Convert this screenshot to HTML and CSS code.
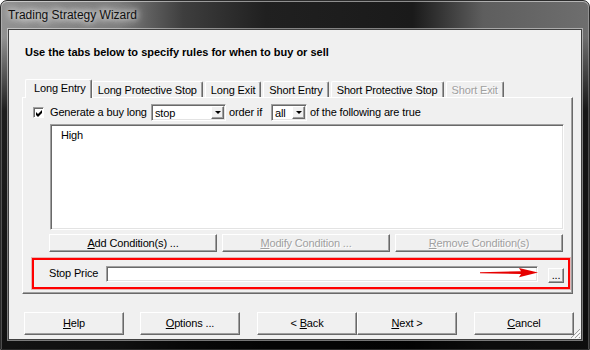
FILE: index.html
```html
<!DOCTYPE html>
<html lang="en">
<head>
    <meta charset="UTF-8">
    <meta name="viewport" content="width=device-width, initial-scale=1.0">
    <title>Trading Strategy Wizard</title>
    <link rel="stylesheet" href="styles.css">
</head>
<body>
    <div class="window">
        <div class="titlebar">Trading Strategy Wizard</div>
        <div class="frame">
            <div class="client">
                <h1 class="intro">Use the tabs below to specify rules for when to buy or sell</h1>

                <!-- Sekmeler -->
                <div class="tabs">
                    <div class="tab active">Long Entry</div>
                    <div class="tab">Long Protective Stop</div>
                    <div class="tab">Long Exit</div>
                    <div class="tab">Short Entry</div>
                    <div class="tab">Short Protective Stop</div>
                    <div class="tab disabled">Short Exit</div>
                </div>

                <div class="panel">
                    <div class="rule-row">
                        <span class="checkbox">
                            <svg width="7" height="7" viewBox="0 0 7 7"><path d="M0 2 L2 4 L6 0 L6 3 L2 7 L0 5 Z" fill="#000"/></svg>
                        </span>
                        <span class="rule-text generate">Generate a buy long</span>
                        <div class="combo combo-order">
                            <span class="combo-text">stop</span>
                            <span class="combo-drop"><span class="tri"></span></span>
                        </div>
                        <span class="rule-text order-if">order if</span>
                        <div class="combo combo-all">
                            <span class="combo-text">all</span>
                            <span class="combo-drop"><span class="tri"></span></span>
                        </div>
                        <span class="rule-text following">of the following are true</span>
                    </div>

                    <div class="listbox">
                        <div class="list-item">High</div>
                    </div>

                    <div class="cond-buttons">
                        <button class="btn cond-btn"><u>A</u>dd Condition(s) ...</button>
                        <button class="btn cond-btn" disabled><u>M</u>odify Condition ...</button>
                        <button class="btn cond-btn" disabled><u>R</u>emove Condition(s)</button>
                    </div>

                    <div class="stop-box">
                        <span class="stop-label">Stop Price</span>
                        <div class="textbox"></div>
                        <button class="btn btn-browse">...</button>
                        <svg class="arrow" width="60" height="12" viewBox="0 0 60 12">
                            <path d="M0 5.2 L41 4.3 L39 1 L58 5.6 L39 10.2 L41 6.9 L0 6.2 Z" fill="#e60000"/>
                        </svg>
                    </div>
                </div>

                <div class="footer">
                    <button class="btn foot-btn help"><u>H</u>elp</button>
                    <button class="btn foot-btn options"><u>O</u>ptions ...</button>
                    <button class="btn foot-btn back">&lt; <u>B</u>ack</button>
                    <button class="btn foot-btn next"><u>N</u>ext &gt;</button>
                    <button class="btn foot-btn"><u>C</u>ancel</button>
                </div>

                <svg class="grip" width="12" height="12" viewBox="0 0 12 12">
                    <path d="M11 2 L2 11 M11 6 L6 11 M11 10 L10 11" stroke="#a0a0a0" stroke-width="1"/>
                    <path d="M12 3 L3 12 M12 7 L7 12" stroke="#fff" stroke-width="1"/>
                </svg>
            </div>
        </div>
    </div>
</body>
</html>
```

FILE: styles.css
```css
* {
    box-sizing: border-box;
}

body {
    margin: 0;
    background-color: #ffffff;
    font-family: "Liberation Sans", Arial, sans-serif;
    font-size: 11px;
    letter-spacing: -0.15px;
    color: #000;
}

/* Pencere çerçevesi */
.window {
    width: 590px;
    height: 350px;
    display: flex;
    flex-direction: column;
    border: 1px solid #2b2b2b;
    border-radius: 7px 7px 0 0;
    overflow: hidden;
    background:
        linear-gradient(to bottom, rgba(0, 0, 0, 0) 0, rgba(0, 0, 0, 0) 36px, rgba(0, 0, 0, 0.8) 110px, rgba(0, 0, 0, 0.88) 100%),
        linear-gradient(to right, #929292 0%, #7c7c7c 20%, #3e3e3e 31%, #202020 45%, #1a1a1a 70%, #5e5e5e 82%, #6e6e6e 100%);
    box-shadow: inset 0 1px 0 rgba(255, 255, 255, 0.5), inset 1px 0 0 rgba(255, 255, 255, 0.25), inset -1px 0 0 rgba(255, 255, 255, 0.25);
}

.titlebar {
    height: 28px;
    line-height: 28px;
    padding-left: 7px;
    font-size: 12px;
    letter-spacing: 0;
    color: #101010;
    text-shadow: 0 0 6px #fff, 0 0 10px rgba(255, 255, 255, 0.8), 0 0 14px rgba(255, 255, 255, 0.6);
}

.frame {
    flex: 1;
    padding: 0 7px 9px 7px;
}

.client {
    position: relative;
    height: 100%;
    background-color: #f0f0f0;
    border: 1px solid #404040;
    box-shadow: 0 0 0 1px rgba(255, 255, 255, 0.45);
}

.intro {
    margin: 0 0 20px 0;
    padding: 16px 0 0 16px;
    font-size: 11px;
    line-height: 13px;
    font-weight: bold;
    letter-spacing: 0;
}

/* Sekmeler */
.tabs {
    display: flex;
    align-items: flex-end;
    height: 18px;
    margin-left: 13px;
    padding-left: 5px;
    position: relative;
    z-index: 1;
}

.tab {
    height: 16px;
    line-height: 15px;
    padding: 1px 5px 0 5px;
    margin-right: 2px;
    background-color: #f0f0f0;
    border-top: 1px solid #fff;
    border-left: 1px solid #fff;
    border-right: 1px solid #696969;
    border-radius: 2px 2px 0 0;
    box-shadow: inset -1px 0 0 #a0a0a0;
    white-space: nowrap;
}

.tab.active {
    height: 19px;
    margin: 0 0 -1px -2px;
    padding: 1px 5px 0 8px;
    line-height: 15px;
}

.tab.disabled {
    color: #a0a0a0;
    text-shadow: 1px 1px 0 #fff;
}

.panel {
    width: 551px;
    height: 197px;
    margin-left: 13px;
    padding: 6px 0 0 10px;
    border: 1px solid;
    border-color: #fff #696969 #696969 #fff;
    box-shadow: inset -1px -1px 0 #a0a0a0;
}

/* Kural satırı */
.rule-row {
    display: flex;
    align-items: center;
    height: 17px;
    line-height: 13px;
    white-space: nowrap;
}

.checkbox {
    width: 11px;
    height: 11px;
    display: flex;
    align-items: center;
    justify-content: center;
    background-color: #fff;
    border: 1px solid;
    border-color: #a0a0a0 #fff #fff #a0a0a0;
    box-shadow: inset 1px 1px 0 #696969;
    padding: 1px 0 0 1px;
}

.generate {
    width: 95px;
    margin-left: 6px;
}

.combo {
    height: 17px;
    display: flex;
    background-color: #fff;
    border: 1px solid;
    border-color: #a0a0a0 #fff #fff #a0a0a0;
    box-shadow: inset 1px 1px 0 #696969, inset -1px -1px 0 #e3e3e3;
    padding: 1px;
}

.combo-order {
    width: 75px;
    margin-left: 6px;
}

.combo-all {
    width: 36px;
}

.combo-text {
    flex: 1;
    padding: 1px 0 0 2px;
}

.combo-drop {
    width: 13px;
    height: 13px;
    display: flex;
    align-items: center;
    justify-content: center;
    background-color: #f0f0f0;
    border: 1px solid;
    border-color: #fff #696969 #696969 #fff;
    box-shadow: inset -1px -1px 0 #a0a0a0;
}

.tri {
    width: 0;
    height: 0;
    border-left: 3px solid transparent;
    border-right: 3px solid transparent;
    border-top: 3px solid #000;
}

.order-if {
    width: 42px;
    margin-left: 3px;
}

.following {
    margin-left: 3px;
}

/* Liste */
.listbox {
    width: 514px;
    height: 106px;
    margin: 3px 0 0 17px;
    padding: 4px 10px;
    background-color: #fff;
    border: 1px solid;
    border-color: #a0a0a0 #fff #fff #a0a0a0;
    box-shadow: inset 1px 1px 0 #696969, inset -1px -1px 0 #e3e3e3;
    line-height: 13px;
}

/* Butonlar */
.btn {
    font-family: inherit;
    font-size: 11px;
    letter-spacing: inherit;
    color: #000;
    line-height: 13px;
    padding: 0;
    background-color: #f0f0f0;
    border: 1px solid;
    border-color: #fff #696969 #696969 #fff;
    box-shadow: inset -1px -1px 0 #a0a0a0;
    border-radius: 0;
}

.btn:disabled {
    color: #a0a0a0;
    text-shadow: 1px 1px 0 #fff;
}

.cond-buttons {
    display: flex;
    gap: 5px;
    margin: 4px 0 0 16px;
}

.cond-btn {
    width: 168px;
    height: 18px;
}

.stop-box {
    position: relative;
    display: flex;
    align-items: center;
    width: 538px;
    height: 31px;
    margin: 6px 0 0 -1px;
    padding: 0 4px 0 15px;
    border: 2px solid #ff0000;
    box-shadow: 0 0 0 1px rgba(200, 0, 0, 0.25);
    line-height: 13px;
}

.stop-label {
    width: 57px;
}

.textbox {
    width: 432px;
    height: 16px;
    margin-top: 1px;
    background-color: #fff;
    border: 1px solid;
    border-color: #a0a0a0 #fff #fff #a0a0a0;
    box-shadow: inset 1px 1px 0 #696969, inset -1px -1px 0 #e3e3e3;
}

.btn-browse {
    width: 16px;
    height: 15px;
    margin: 3px 0 0 10px;
    line-height: 11px;
}

.arrow {
    position: absolute;
    left: 446px;
    top: 7px;
}

/* Alt butonlar */
.footer {
    display: flex;
    margin: 18px 0 0 15px;
}

.foot-btn {
    width: 100px;
    height: 23px;
}

.help {
    margin-right: 16px;
}

.options {
    margin-right: 17px;
}

.next {
    margin-right: 17px;
}

.grip {
    position: absolute;
    right: 0;
    bottom: 0;
}
```
